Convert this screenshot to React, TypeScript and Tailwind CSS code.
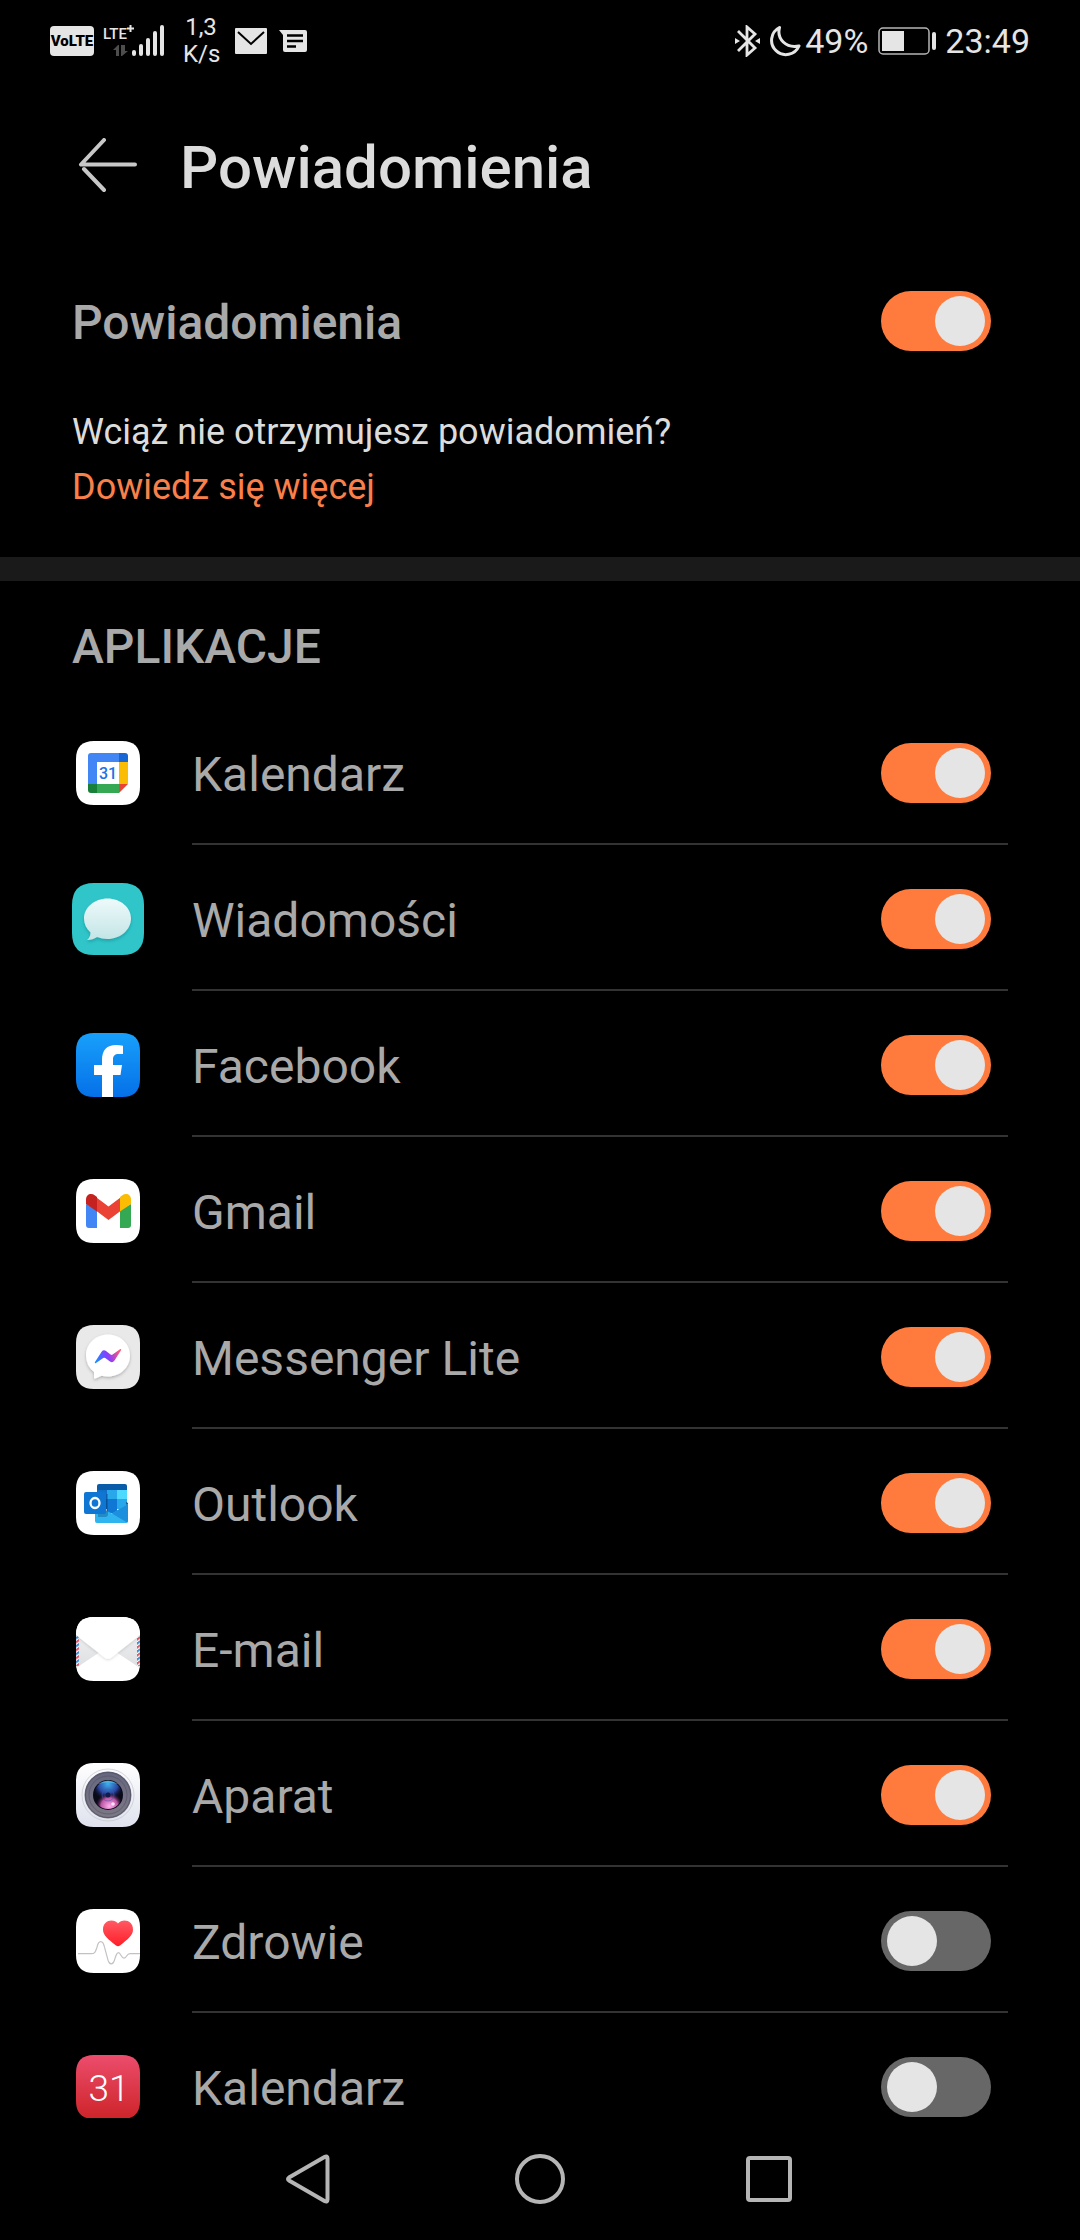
import { useState } from "react"
import type { ReactNode } from "react"

function VolteIcon() {
  return (
    <span className="flex h-[30px] w-11 items-center justify-center rounded-[4px] bg-[#e5e5e5] text-[15px] font-black text-black">
      VoLTE
    </span>
  )
}

function SignalIcon() {
  return (
    <svg width="64" height="34" viewBox="0 0 64 34" fill="#e5e5e5">
      <text x="0" y="15" fontSize="15" fontWeight="500">
        LTE
      </text>
      <path d="M26.500 1h2v2.500H31v2h-2.500V8h-2V5.500H24v-2h2.500z" />
      <path d="M16 21v11h-3v-6h-3l5-5zM18 21v11h1l6-5h-3v-6z" fill="#4d4d4d" />
      <rect x="29" y="26" width="4" height="6" rx="2" />
      <rect x="36" y="20" width="4" height="12" rx="2" />
      <rect x="43" y="14" width="4" height="18" rx="2" />
      <rect x="50" y="7" width="4" height="25" rx="2" />
      <rect x="57" y="1" width="4" height="31" rx="2" />
    </svg>
  )
}

function StatusBar() {
  return (
    <div className="flex h-20 shrink-0 items-center justify-between px-[50px] pt-0.5 text-[#e5e5e5]">
      <div className="flex items-center">
        <VolteIcon />
        <div className="ml-[9px]">
          <SignalIcon />
        </div>
        <p className="ml-4 w-9 text-center text-2xl leading-[27px]">
          1,3
          <br />
          K/s
        </p>
        <svg className="ml-4" width="32" height="26" viewBox="0 0 32 26">
          <rect width="32" height="26" rx="1" fill="#e5e5e5" />
          <path d="M3 4l13 12L29 4" fill="none" stroke="#000" strokeWidth="2" />
        </svg>
        <svg className="ml-3" width="28" height="22" viewBox="0 0 28 22">
          <path d="M0 0h26q2 0 2 2v18q0 2-2 2H6q-2 0-2-2V5z" fill="#e5e5e5" />
          <path d="M8 5.500h16M8 11h16M8 16.500h9" stroke="#000" strokeWidth="2.500" />
        </svg>
      </div>
      <div className="flex items-center">
        <svg width="26" height="32" viewBox="0 0 26 32">
          <path d="M3 6l17 17-8 7V2l8 7L3 26" fill="none" stroke="#e5e5e5" strokeWidth="2.800" />
          <path d="M0 13l5 3-5 3zM25 13l-5 3 5 3z" fill="#e5e5e5" />
        </svg>
        <svg className="ml-2" width="32" height="32" viewBox="0 0 32 32">
          <path
            d="M10.500 2.500A14.300 14.300 0 1 0 30 21C17 23.500 7.500 14 10.500 2.500z"
            fill="none"
            stroke="#e5e5e5"
            strokeWidth="3"
            strokeLinejoin="round"
          />
        </svg>
        <span className="ml-1 text-[34px] leading-10">49%</span>
        <svg className="ml-2.5" width="59" height="28" viewBox="0 0 59 28">
          <rect x="1" y="1" width="50" height="26" rx="4" fill="none" stroke="#b5b5b5" strokeWidth="1.500" />
          <rect x="4" y="4" width="22" height="20" fill="#e5e5e5" />
          <rect x="54" y="5" width="4" height="18" rx="2" fill="#e5e5e5" />
        </svg>
        <span className="ml-2 text-[34px] leading-10">23:49</span>
      </div>
    </div>
  )
}

function AppIcon({ children, fill = "#fff", id }: { children: ReactNode; fill?: string; id: string }) {
  return (
    <svg width="64" height="64" viewBox="0 0 64 64">
      <clipPath id={id}>
        <path d="M0 18Q0 0 18 0H46Q64 0 64 18V46Q64 64 46 64H18Q0 64 0 46z" />
      </clipPath>
      <g clipPath={`url(#${id})`}>
        <rect width="64" height="64" fill={fill} />
        {children}
      </g>
    </svg>
  )
}

function GoogleCalendarIcon() {
  return (
    <AppIcon id="gcal">
      <path d="M15 12h28v9H21v22h-9V15q0-3 3-3z" fill="#4285f4" />
      <path d="M43 12h6q3 0 3 3v6h-9z" fill="#1967d2" />
      <path d="M43 21h9v22h-9z" fill="#fbbc04" />
      <path d="M21 43h22v9H21z" fill="#34a853" />
      <path d="M12 43h9v9h-6q-3 0-3-3z" fill="#188038" />
      <path d="M43 43h9l-9 9z" fill="#ea4335" />
      <text x="32" y="38" fontSize="16" fontWeight="500" textAnchor="middle" fill="#1a73e8">
        31
      </text>
    </AppIcon>
  )
}

function MessagesIcon() {
  return (
    <svg width="72" height="72" viewBox="0 0 72 72">
      <defs>
        <linearGradient id="bubble" x1="0" y1="0" x2="0" y2="1">
          <stop offset="0" stopColor="#eefafa" />
          <stop offset="1" stopColor="#c3e4e6" />
        </linearGradient>
        <filter id="bubbleShadow" x="-20%" y="-20%" width="140%" height="150%">
          <feDropShadow dx="0" dy="2" stdDeviation="1.500" floodColor="#0b7f84" floodOpacity="0.5" />
        </filter>
      </defs>
      <path d="M0 22Q0 0 22 0H50Q72 0 72 22V50Q72 72 50 72H22Q0 72 0 50z" fill="#30c5c9" />
      <path
        d="M35.500 15.500C48.500 15.500 59 24.500 59 35.500S48.500 56 35.500 56Q30 56 25 54Q21 57 15 57Q18.500 54 18.500 49.500Q12 43.500 12 35.500C12 24.500 22.500 15.500 35.500 15.500z"
        fill="url(#bubble)"
        filter="url(#bubbleShadow)"
      />
    </svg>
  )
}

function FacebookIcon() {
  return (
    <AppIcon id="fb" fill="url(#fbBlue)">
      <linearGradient id="fbBlue" x1="0" y1="0" x2="0" y2="1">
        <stop offset="0" stopColor="#18a0fb" />
        <stop offset="1" stopColor="#0570e8" />
      </linearGradient>
      <path d="M26 64V42h-8V32h8v-5C26 17 31 12 40 12q4 0 7 .800V21h-4c-4.500 0-6 2-6 5.500V32h9l-1.500 10H37v22z" fill="#fff" />
    </AppIcon>
  )
}

function GmailIcon() {
  return (
    <AppIcon id="gmail">
      <path d="M10 25l11 6v18h-8q-3 0-3-3z" fill="#4285f4" />
      <path d="M55 25l-11 6v18h8q3 0 3-3z" fill="#34a853" />
      <path d="M20.500 18.500L32.500 27.500 44.500 18.500V32L32.500 41 20.500 32z" fill="#ea4335" />
      <path d="M10 20.500c0-5 5-7 9-4l2 1.500v14.500L10 25z" fill="#c5221f" />
      <path d="M55 20.500c0-5-5-7-9-4L44 18v14.500L55 25z" fill="#fbbc04" />
    </AppIcon>
  )
}

function MessengerIcon() {
  return (
    <AppIcon id="msgr" fill="#e9e9e9">
      <defs>
        <linearGradient id="bolt" x1="0" y1="0.6" x2="1" y2="0.4">
          <stop offset="0" stopColor="#1a8cff" />
          <stop offset="0.5" stopColor="#8a3cff" />
          <stop offset="1" stopColor="#ff5a78" />
        </linearGradient>
        <filter id="msgrShadow" x="-20%" y="-20%" width="140%" height="150%">
          <feDropShadow dx="0" dy="1.500" stdDeviation="1.500" floodColor="#000" floodOpacity="0.25" />
        </filter>
      </defs>
      <path
        d="M32 9.500C44.500 9.500 54 19 54 30.500S44.500 51.500 32 51.500Q28.500 51.500 25.500 50.700L19.500 53.400Q18 54 18 52.500V47Q10 40.500 10 30.500C10 19 19.500 9.500 32 9.500z"
        fill="#fff"
        filter="url(#msgrShadow)"
      />
      <path
        d="M19 37l6.600-10.200Q27.500 24.300 30 26l4.600 3.600q1 .700 2 0L44 24.300q1.800-.800 1 1l-6.500 10.200Q36.600 38.300 34 36.500l-4.800-3.400q-1-.700-2 0L20 38q-1.800.700-1-1z"
        fill="url(#bolt)"
      />
    </AppIcon>
  )
}

function OutlookIcon() {
  return (
    <AppIcon id="outlook">
      <path d="M23 13h26q2 0 2 2v4H21v-4q0-2 2-2z" fill="#0a5ba8" />
      <path d="M21 19h10v9H21z" fill="#1170c8" />
      <path d="M31 19h10v9H31z" fill="#28a8ea" />
      <path d="M41 19h10v9H41z" fill="#50d9ff" />
      <path d="M21 28h10v10H21z" fill="#0a5ba8" />
      <path d="M31 28h10v14H31z" fill="#0f78d4" />
      <path d="M41 28h10v10H41z" fill="#28a8ea" />
      <path d="M50 31l2 1-1 3z" fill="#123b6d" />
      <path d="M19 34l17 8.500L52 33v17q0 2-2 2H21q-2 0-2-2z" fill="#30b4f0" />
      <path d="M36 42.500L52 33v17q0 1-1 1.500z" fill="#1c90dc" />
      <path d="M22 23h10v20q0 3-3 3h-7z" fill="#083b75" opacity="0.35" />
      <rect x="8" y="21" width="22" height="22" rx="2" fill="#1076d4" />
      <ellipse cx="19" cy="32" rx="4.500" ry="5" fill="none" stroke="#fff" strokeWidth="2.300" />
    </AppIcon>
  )
}

function EmailIcon() {
  return (
    <AppIcon id="email">
      <defs>
        <pattern id="airmail" width="4" height="8" patternUnits="userSpaceOnUse" patternTransform="skewY(-35)">
          <rect width="4" height="8" fill="#fff" />
          <rect width="4" height="2.600" fill="#e0586a" />
          <rect y="4" width="4" height="2.600" fill="#3f8ed8" />
        </pattern>
        <linearGradient id="fold" x1="0" y1="0" x2="0" y2="1">
          <stop offset="0" stopColor="#eeeeef" />
          <stop offset="1" stopColor="#dedfe2" />
        </linearGradient>
        <filter id="flapShadow" x="-20%" y="-20%" width="140%" height="150%">
          <feDropShadow dx="0" dy="1" stdDeviation="1.500" floodColor="#000" floodOpacity="0.150" />
        </filter>
      </defs>
      <path d="M0 18l24 17L0 51zM64 18L40 35l24 16z" fill="url(#fold)" />
      <path d="M0 18h3v31H0zM61 18h3v31h-3z" fill="url(#airmail)" />
      <path d="M0 0h64v18L35.500 40.500q-3.500 2.500-7 0L0 18z" fill="#fff" filter="url(#flapShadow)" />
    </AppIcon>
  )
}

function CameraIcon() {
  return (
    <AppIcon id="camera" fill="url(#cameraBody)">
      <defs>
        <linearGradient id="cameraBody" x1="0" y1="0" x2="0" y2="1">
          <stop offset="0" stopColor="#ffffff" />
          <stop offset="1" stopColor="#dfe2ee" />
        </linearGradient>
        <linearGradient id="cameraRing" x1="0" y1="0" x2="0" y2="1">
          <stop offset="0" stopColor="#66677f" />
          <stop offset="1" stopColor="#7d7985" />
        </linearGradient>
        <radialGradient id="lensTop" cx="0.500" cy="0.100" r="0.600">
          <stop offset="0" stopColor="#3fb0ee" />
          <stop offset="0.600" stopColor="#2b45a0" />
          <stop offset="1" stopColor="#0a0b20" stopOpacity="0" />
        </radialGradient>
        <radialGradient id="lensBottom" cx="0.550" cy="0.900" r="0.500">
          <stop offset="0" stopColor="#ffb0ee" />
          <stop offset="0.600" stopColor="#bd55a4" />
          <stop offset="1" stopColor="#1b0d2a" stopOpacity="0" />
        </radialGradient>
      </defs>
      <circle cx="32" cy="32" r="26" fill="none" stroke="#c4c6cf" strokeWidth="0.700" />
      <circle cx="32" cy="32" r="23.500" fill="url(#cameraRing)" />
      <circle cx="32" cy="32" r="22.500" fill="none" stroke="#555769" strokeWidth="1" />
      <circle cx="32" cy="32" r="19" fill="none" stroke="#56566a" strokeWidth="0.700" />
      <circle cx="32" cy="32" r="15" fill="#090a18" />
      <circle cx="32" cy="32" r="14" fill="url(#lensTop)" />
      <circle cx="32" cy="32" r="14" fill="url(#lensBottom)" />
      <circle cx="32" cy="32" r="6" fill="none" stroke="#4059ae" strokeWidth="0.800" opacity="0.700" />
      <circle cx="32" cy="32" r="2.500" fill="#131b48" />
      <path d="M22 21q10-7 20 0-10-3-20 0z" fill="#5cc8f0" opacity="0.600" />
      <circle cx="37" cy="41" r="1.800" fill="#ffe3fa" />
    </AppIcon>
  )
}

function HealthIcon() {
  return (
    <AppIcon id="health">
      <linearGradient id="heart" x1="0" y1="0" x2="0" y2="1">
        <stop offset="0" stopColor="#ff5a64" />
        <stop offset="1" stopColor="#ff1e28" />
      </linearGradient>
      <path
        d="M2 44.700h13c4 0 4.500-2 6-6.500 1.500-7.500 6-7.500 7.500 0l3.500 13c1.500 5 5 5 6.500 0 1.500-5 2-7.500 4-7.500s3 5.500 5.500 5.500 2.500-4.500 6-4.500H64"
        fill="none"
        stroke="#c2c2c2"
        strokeWidth="1.200"
      />
      <path
        d="M42 14.500C46 9.500 57 10.500 57 20.500c0 6-5 9.500-13 16q-2 1.300-4 0C32 30 27 26.500 27 20.500 27 10.500 38 9.500 42 14.500z"
        fill="url(#heart)"
      />
    </AppIcon>
  )
}

function CalendarIcon() {
  return (
    <AppIcon id="cal" fill="url(#calRed)">
      <linearGradient id="calRed" x1="0" y1="0" x2="0" y2="1">
        <stop offset="0" stopColor="#ec4d6c" />
        <stop offset="1" stopColor="#cd2429" />
      </linearGradient>
      <text x="33" y="46" fontSize="37" fontWeight="300" textAnchor="middle" fill="#fff">
        31
      </text>
    </AppIcon>
  )
}

function Toggle({ id, defaultChecked }: { id: string; defaultChecked: boolean }) {
  const [checked, setChecked] = useState(defaultChecked)

  return (
    <input
      id={id}
      type="checkbox"
      role="switch"
      checked={checked}
      onChange={(e) => setChecked(e.target.checked)}
      className="h-[60px] w-[110px] shrink-0 cursor-pointer appearance-none rounded-full bg-[#676767] px-1.5 py-[5px] before:block before:size-[50px] before:rounded-full before:bg-[#e5e5e5] checked:bg-[#ff7b3d] checked:before:translate-x-12"
    />
  )
}

const apps = [
  { id: "google-calendar", name: "Kalendarz", icon: <GoogleCalendarIcon />, enabled: true },
  { id: "messages", name: "Wiadomości", icon: <MessagesIcon />, enabled: true },
  { id: "facebook", name: "Facebook", icon: <FacebookIcon />, enabled: true },
  { id: "gmail-app", name: "Gmail", icon: <GmailIcon />, enabled: true },
  { id: "messenger", name: "Messenger Lite", icon: <MessengerIcon />, enabled: true },
  { id: "outlook-app", name: "Outlook", icon: <OutlookIcon />, enabled: true },
  { id: "email-app", name: "E-mail", icon: <EmailIcon />, enabled: true },
  { id: "camera-app", name: "Aparat", icon: <CameraIcon />, enabled: true },
  { id: "health-app", name: "Zdrowie", icon: <HealthIcon />, enabled: false },
  { id: "calendar", name: "Kalendarz", icon: <CalendarIcon />, enabled: false },
]

function NavBar() {
  return (
    <nav className="flex h-[122px] shrink-0 items-center justify-center gap-40 bg-black">
      <button type="button" aria-label="Wstecz" className="flex w-[70px] justify-center">
        <svg width="52" height="52" viewBox="0 0 52 52" fill="none" stroke="#b5b5b5" strokeWidth="4" strokeLinejoin="round">
          <path d="M5 24.500L40.500 4q3-1.500 3 1.500v41q0 3-3 1.500L5 27.500q-2-1.500 0-3z" />
        </svg>
      </button>
      <button type="button" aria-label="Ekran główny" className="flex w-[70px] justify-center">
        <svg width="52" height="52" viewBox="0 0 52 52" fill="none" stroke="#b5b5b5" strokeWidth="4">
          <circle cx="26" cy="26" r="23" />
        </svg>
      </button>
      <button type="button" aria-label="Ostatnie" className="flex w-[70px] justify-center">
        <svg width="52" height="52" viewBox="0 0 52 52" fill="none" stroke="#b5b5b5" strokeWidth="4">
          <rect x="4" y="5" width="42" height="42" rx="2" />
        </svg>
      </button>
    </nav>
  )
}

export default function App() {
  return (
    <div className="flex h-screen flex-col bg-black font-['Roboto',sans-serif] text-[#a9a9a9]">
      <StatusBar />
      <header className="flex h-44 shrink-0 items-center gap-10 px-[72px]">
        <button type="button" aria-label="Wróć">
          <svg width="68" height="60" viewBox="0 0 68 60" fill="none" stroke="#c8c8c8" strokeWidth="4" strokeLinecap="round">
            <path d="M32 2L9 26.500H63M12 31L32 52" strokeLinejoin="round" />
          </svg>
        </button>
        <h1 className="text-6xl leading-none font-medium text-[#dcdcdc]">Powiadomienia</h1>
      </header>

      <main className="min-h-0 flex-1 overflow-y-auto [scrollbar-width:none]">
        <section className="border-b-24 border-[#1a1a1a] pb-[42px] pl-[72px]">
          <div className="flex h-[130px] items-center justify-between pr-[89px]">
            <label htmlFor="all" className="pt-1 text-5xl leading-14 font-medium">
              Powiadomienia
            </label>
            <Toggle id="all" defaultChecked />
          </div>
          <p className="mt-[19px] text-4xl leading-[55px] text-[#dcdcdc]">
            Wciąż nie otrzymujesz powiadomień?
            <br />
            <a href="#help" className="text-[#f9804a]">
              Dowiedz się więcej
            </a>
          </p>
        </section>

        <h2 className="px-[72px] pt-[38px] pb-6 text-5xl leading-14 font-medium">APLIKACJE</h2>
        <ul>
          {apps.map((app) => (
            <li key={app.id} className="group flex h-[146px] gap-12 px-[72px]">
              <div className="flex w-[72px] items-center justify-center pt-0.5">{app.icon}</div>
              <div className="flex flex-1 items-center justify-between border-b-2 border-[#333] pt-1 pr-[17px] group-last:border-transparent">
                <label htmlFor={app.id} className="pt-1 text-5xl leading-14">
                  {app.name}
                </label>
                <Toggle id={app.id} defaultChecked={app.enabled} />
              </div>
            </li>
          ))}
        </ul>
      </main>
      <NavBar />
    </div>
  )
}
